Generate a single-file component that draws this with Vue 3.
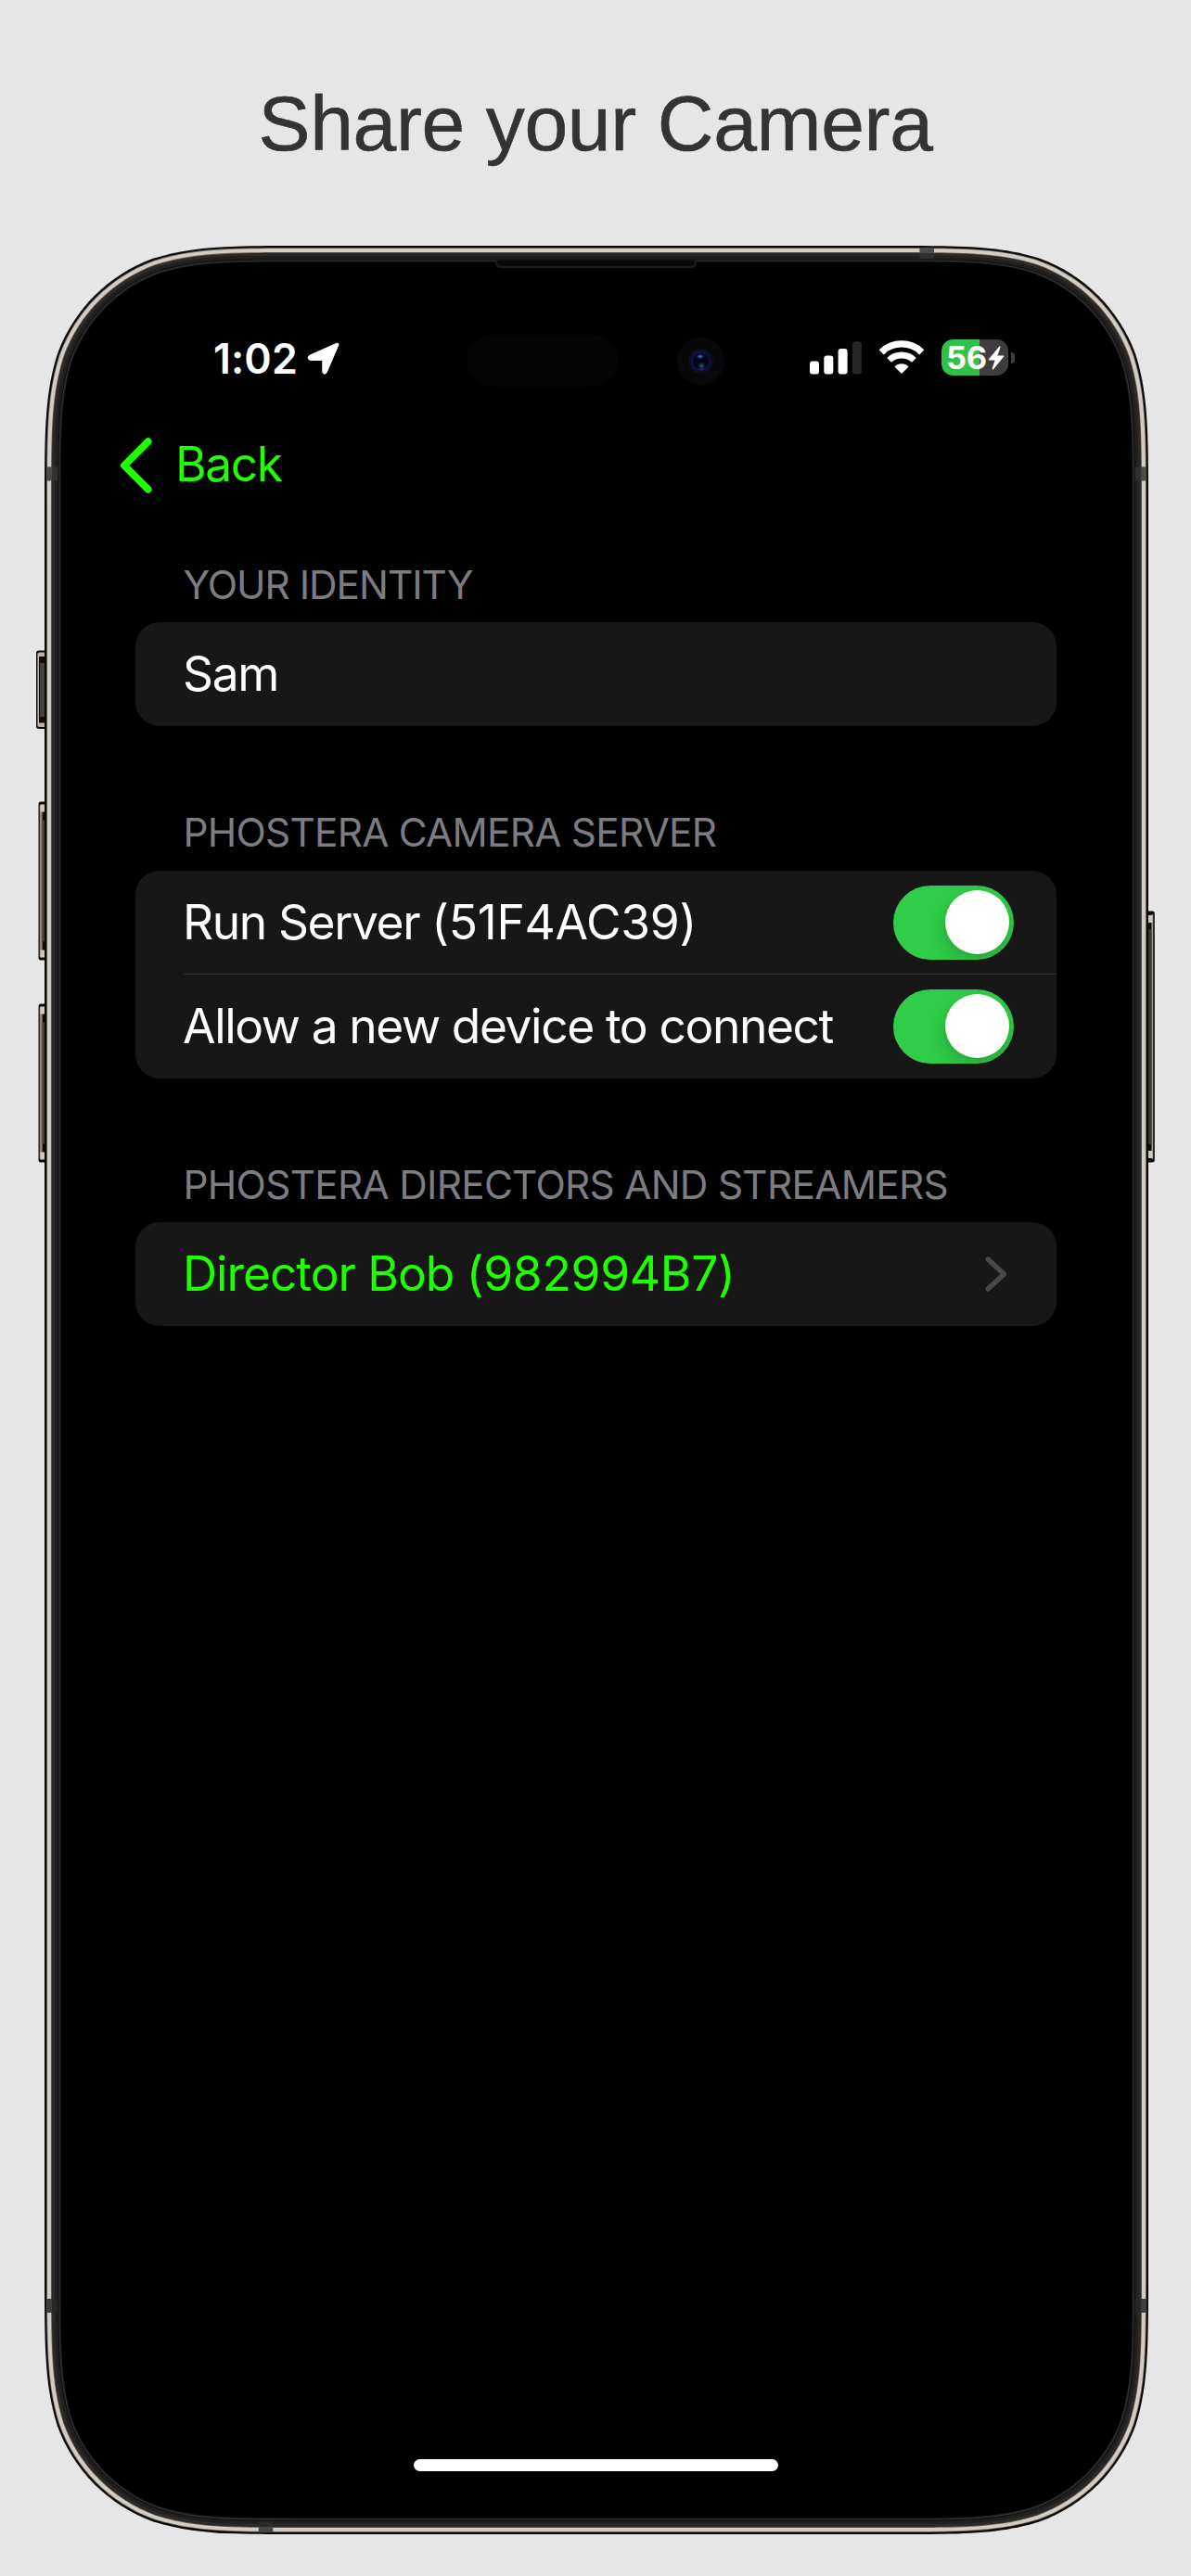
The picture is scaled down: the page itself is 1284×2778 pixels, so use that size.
<script setup>
import { ref } from 'vue'

const W = 1190
const H = 2468
const R = 185

// Continuous-curvature rounded rectangle, inset from the body outline
function shell(inset) {
  const w = W - inset * 2
  const h = H - inset * 2
  const r = R - inset
  const a = 1.52866 * r
  const b = 1.08849 * r
  const c = 0.86841 * r
  const d = 0.63149 * r
  const e = 0.37282 * r
  const f = 0.16906 * r
  const g = 0.07491 * r
  const X = (v) => (inset + v).toFixed(2)
  const p = (x, y) => `${X(x)} ${X(y)}`
  return [
    `M${p(a, 0)}L${p(w - a, 0)}`,
    `C${p(w - b, 0)} ${p(w - c, 0)} ${p(w - d, g)}`,
    `C${p(w - e, f)} ${p(w - f, e)} ${p(w - g, d)}`,
    `C${p(w, c)} ${p(w, b)} ${p(w, a)}`,
    `L${p(w, h - a)}`,
    `C${p(w, h - b)} ${p(w, h - c)} ${p(w - g, h - d)}`,
    `C${p(w - f, h - e)} ${p(w - e, h - f)} ${p(w - d, h - g)}`,
    `C${p(w - c, h)} ${p(w - b, h)} ${p(w - a, h)}`,
    `L${p(a, h)}`,
    `C${p(b, h)} ${p(c, h)} ${p(d, h - g)}`,
    `C${p(e, h - f)} ${p(f, h - e)} ${p(g, h - d)}`,
    `C${p(0, h - c)} ${p(0, h - b)} ${p(0, h - a)}`,
    `L${p(0, a)}`,
    `C${p(0, b)} ${p(0, c)} ${p(g, d)}`,
    `C${p(f, e)} ${p(e, f)} ${p(d, g)}`,
    `C${p(c, 0)} ${p(b, 0)} ${p(a, 0)}Z`,
  ].join('')
}

const layers = [
  [0, '#0a0a09'],
  [2.2, '#77706a'],
  [3, '#d4cbc3'],
  [7, '#655e58'],
  [7.8, '#2b2927'],
  [11, '#201f1d'],
  [14.4, '#0c0c0c'],
  [15.4, '#323232'],
  [16.6, '#1a1a1a'],
  [17.6, '#000'],
].map(([inset, fill]) => ({ d: shell(inset), fill }))

// Antenna bands: x, y, width, height, fill in body coordinates
const bands = [
  [943.5, 2, 15.5, 6, '#4b4b4a'],
  [943.5, 8, 15.5, 6, '#30302f'],
  [2.3, 238.5, 6, 15, '#4b4b4a'],
  [8.3, 238.5, 6, 15, '#30302f'],
  [1181.7, 238.5, 6, 15, '#4b4b4a'],
  [1175.7, 238.5, 6, 15, '#30302f'],
  [2.3, 2214, 6, 15, '#3d3d3c'],
  [8.3, 2214, 6, 15, '#272726'],
  [1181.7, 2214, 6, 15, '#3d3d3c'],
  [1175.7, 2214, 6, 15, '#272726'],
  [230.7, 2460, 15.5, 6, '#464645'],
  [230.7, 2454, 15.5, 6, '#2a2a29'],
]

const volumeKeys = [599.5, 817.5]

const name = ref('Sam')
const toggles = ref([
  { label: 'Run Server', id: '(51F4AC39)', on: true },
  { label: 'Allow a new device to connect', id: '', on: true },
])
</script>

<template>
  <main class="stage">
    <h1 class="title">Share your Camera</h1>

    <div class="phone">
      <svg class="body" width="1210" height="2468" viewBox="-10 0 1210 2468" aria-hidden="true">
        <g>
          <rect x="-9" y="436.5" width="14" height="84.5" rx="3" fill="#0d0c0b" />
          <rect x="-7.6" y="438.5" width="12" height="80.5" rx="2" fill="#b9b0a7" />
          <rect x="-6" y="443" width="10" height="71.5" fill="#0f0e0d" />
          <rect x="-5" y="450" width="6" height="58" fill="#454240" />
        </g>
        <g v-for="y in volumeKeys" :key="y">
          <rect x="-6.5" :y="y" width="12" height="171" rx="2.5" fill="#0d0c0b" />
          <rect x="-5.3" :y="y + 3" width="3" height="165" rx="1.5" fill="#8d857e" />
          <rect x="-4.5" :y="y + 3" width="5.5" height="8" rx="1" fill="#d1c8bf" />
          <rect x="-4.5" :y="y + 160" width="5.5" height="8" rx="1" fill="#d1c8bf" />
          <rect x="-2.6" :y="y + 20" width="3.2" height="131" fill="#47423f" />
        </g>
        <g>
          <rect x="1184" y="717.5" width="12.8" height="271" rx="2.5" fill="#0d0c0b" />
          <rect x="1193.4" y="721" width="1.8" height="264" rx="0.9" fill="#9b928a" />
          <rect x="1189.5" y="722" width="5" height="8" rx="1" fill="#d1c8bf" />
          <rect x="1189.5" y="976" width="5" height="8" rx="1" fill="#d1c8bf" />
          <rect x="1190" y="737" width="3.2" height="232" fill="#393533" />
        </g>
        <path v-for="l in layers" :key="l.fill" :d="l.d" :fill="l.fill" />
        <rect
          v-for="(b, i) in bands" :key="i"
          :x="b[0]" :y="b[1]" :width="b[2]" :height="b[3]" :fill="b[4]"
        />
        <path d="M486 15.5H703V18Q703 24 697 24H492Q486 24 486 18Z" fill="#1c1c1c" />
        <path d="M488 15.5V18Q489 22 494 22H695Q700 22 701 18V15.5Z" fill="#0a0a0a" />
      </svg>

      <div class="screen">
        <header class="status">
          <div class="clock">
            <span class="time">1:02</span>
            <svg width="36" height="36" viewBox="0 0 36 36" aria-hidden="true">
              <path d="M2.8 14.2 31.6 1.4Q34.8.4 33.7 3.5L21.2 32.6Q20 34.8 18 34Q16.8 33.5 16.8 31.6V20.4Q16.8 19.4 15.8 19.4H4Q1.6 19.4 1.2 17.3Q.9 15.2 2.8 14.2Z" fill="#fff" stroke="#fff" stroke-width="1" />
            </svg>
          </div>

          <div class="sensors">
            <span class="pill"></span>
            <span class="lens">
              <svg width="51" height="51" viewBox="0 0 51 51" aria-hidden="true">
                <defs>
                  <radialGradient id="spotA"><stop offset="0" stop-color="#6a76d8" /><stop offset="1" stop-color="#1c1f7c" stop-opacity="0" /></radialGradient>
                  <radialGradient id="spotB"><stop offset="0" stop-color="#1c6a78" /><stop offset="1" stop-color="#0b2a4c" stop-opacity="0" /></radialGradient>
                  <radialGradient id="spotC"><stop offset="0" stop-color="#6a1c8c" /><stop offset="1" stop-color="#2c0b4c" stop-opacity="0" /></radialGradient>
                </defs>
                <circle cx="25.5" cy="25.5" r="25.5" fill="#080709" />
                <circle cx="25.5" cy="25.5" r="13.5" fill="#0e0e1c" />
                <circle cx="25.5" cy="25.5" r="9.6" fill="#04040f" stroke="#10124a" stroke-width="2" />
                <ellipse cx="25" cy="20.5" rx="5" ry="3.4" fill="url(#spotA)" />
                <ellipse cx="26.3" cy="30.5" rx="5" ry="4.4" fill="url(#spotB)" />
                <ellipse cx="26.3" cy="34" rx="4" ry="2" fill="url(#spotC)" />
              </svg>
            </span>
          </div>

          <div class="indicators">
            <svg class="signal" width="56" height="36" viewBox="0 0 56 36" aria-hidden="true">
              <rect x="0" y="21.5" width="10" height="14" rx="3" fill="#fff" />
              <rect x="15.3" y="15.5" width="10" height="20" rx="3" fill="#fff" />
              <rect x="30.6" y="8" width="10" height="27.5" rx="3" fill="#fff" />
              <rect x="46" y="0.3" width="9.8" height="35.2" rx="3" fill="#272727" />
            </svg>
            <svg class="wifi" width="50" height="37" viewBox="0 0 50 37" fill="none" stroke="#fff" aria-hidden="true">
              <path d="M3.2 12.8A31.2 31.2 0 0 1 46.8 12.8" stroke-width="7.2" />
              <path d="M11.6 21.4A19.3 19.3 0 0 1 38.4 21.4" stroke-width="6.8" />
              <path d="M25 36 17.4 28.4A10.8 10.8 0 0 1 32.6 28.4Z" fill="#fff" stroke="none" />
            </svg>
            <div class="battery">
              <div class="cell">
                <span class="percent">56</span>
                <svg width="18" height="26" viewBox="0 0 18 26" aria-hidden="true">
                  <path d="M12.4.6 1 14.2Q.2 15.4 1.6 15.4H7.6L4.6 24.4Q4.6 26 6 25.2L17.2 11.6Q18 10.4 16.6 10.4H10.4L13.5 1.6Q13.6 0 12.4.6Z" fill="#fff" />
                </svg>
              </div>
              <span class="nub"></span>
            </div>
          </div>
        </header>

        <nav class="nav">
          <svg width="36" height="60" viewBox="0 0 36 60" aria-hidden="true">
            <path d="M30.7 4.2 5 30 30.7 55.8" fill="none" stroke="#20ff00" stroke-width="7.8" stroke-linecap="round" stroke-linejoin="round" />
          </svg>
          <span class="back">Back</span>
        </nav>

        <section class="group">
          <h2 class="identity">YOUR IDENTITY</h2>
          <div class="card">
            <div class="row"><span class="label">{{ name }}</span></div>
          </div>
        </section>

        <section class="group">
          <h2 class="camera">PHOSTERA CAMERA SERVER</h2>
          <div class="card">
            <div v-for="t in toggles" :key="t.label" class="row">
              <span class="label">{{ t.label }} <span class="id">{{ t.id }}</span></span>
              <button class="switch" :class="{ on: t.on }" role="switch" :aria-checked="t.on" @click="t.on = !t.on">
                <span class="knob"></span>
              </button>
            </div>
          </div>
        </section>

        <section class="group">
          <h2 class="directors">PHOSTERA DIRECTORS AND STREAMERS</h2>
          <div class="card">
            <div class="row link">
              <span class="label director">Director Bob <span class="id">(982994B7)</span></span>
              <svg width="24" height="38" viewBox="0 0 24 38" aria-hidden="true">
                <path d="M3.2 3 20.4 19 3.2 35" fill="none" stroke="#48484a" stroke-width="5.4" stroke-linecap="round" stroke-linejoin="round" />
              </svg>
            </div>
          </div>
        </section>

        <div class="home"></div>
      </div>
    </div>
  </main>
</template>

<style>
body {
  margin: 0;
  background: #e6e6e6;
}
</style>

<style scoped>
.stage {
  width: 1284px;
  height: 2778px;
  overflow: hidden;
  background: #e6e6e6;
  font-family: Inter, "Liberation Sans", sans-serif;
}

.title {
  height: 175px;
  margin: 0 0 90px;
  padding-top: 88px;
  box-sizing: border-box;
  font: 400 84px/90px "Liberation Sans", Arial, sans-serif;
  letter-spacing: -0.35px;
  text-align: center;
  color: #333;
  -webkit-text-stroke: 0.6px #333;
}

.phone {
  position: relative;
  width: 1190px;
  height: 2468px;
  margin-left: 48px;
}

.body {
  position: absolute;
  top: 0;
  left: -10px;
}

.screen {
  position: relative;
  display: flex;
  flex-direction: column;
  height: 2468px;
  padding: 96px 99px 68px 98px;
  box-sizing: border-box;
}

.status {
  display: flex;
  align-items: center;
  height: 56px;
  padding: 0 44px 0 84px;
}

.clock {
  display: flex;
  align-items: center;
  width: 273px;
}

.time {
  width: 100px;
  margin: -4px 1px 0 0;
  line-height: 54px;
  font-size: 44.7px;
  font-weight: 600;
  letter-spacing: 0.1px;
  color: #fff;
}

.clock svg {
  margin-top: -5px;
}

.sensors {
  display: flex;
  align-items: center;
  gap: 63px;
  width: 278px;
}

.pill {
  width: 164px;
  height: 56px;
  border-radius: 28px;
  background: #040404;
}

.lens {
  display: flex;
}

.indicators {
  display: flex;
  align-items: center;
  margin-left: 91.5px;
}

.signal {
  margin-top: -6px;
}

.wifi {
  margin: -7px 18px 0 18.5px;
}

.battery {
  display: flex;
  align-items: center;
  gap: 3px;
  margin-top: -7px;
}

.cell {
  display: flex;
  align-items: center;
  width: 72px;
  height: 39px;
  padding-left: 5px;
  box-sizing: border-box;
  border-radius: 12.5px;
  background: linear-gradient(90deg, #31c148 41px, #3d3d3f 41px);
}

.percent {
  width: 45px;
  line-height: 39px;
  font-size: 34.5px;
  font-weight: 700;
  letter-spacing: -0.4px;
  color: #fff;
}

.nub {
  width: 4px;
  height: 12px;
  border-radius: 0 5px 5px 0;
  background: #3d3d3f;
}

.nav {
  display: flex;
  align-items: center;
  height: 60px;
  margin: 54.5px 0 0 -17px;
}

.back {
  margin: -3px 0 0 24px;
  line-height: 60px;
  font-size: 51.5px;
  letter-spacing: -1.4px;
  color: #20ff00;
}

.group {
  margin-bottom: 90px;
}

.nav + .group {
  margin-top: 74px;
}

.group h2 {
  height: 50px;
  margin: 0 0 15.5px;
  padding-left: 51.5px;
  line-height: 50px;
  font-size: 42.3px;
  font-weight: 400;
  white-space: nowrap;
  color: #7d7c82;
}

.identity { letter-spacing: -1px; }
.camera { letter-spacing: -0.74px; }
.directors { letter-spacing: -0.7px; }

.card {
  border-radius: 26px;
  background: #171717;
}

.row {
  position: relative;
  display: flex;
  align-items: center;
  justify-content: space-between;
  height: 112px;
  padding: 0 46px 0 51px;
  line-height: 62px;
  font-size: 51.5px;
  white-space: nowrap;
  color: #fff;
}

.row + .row::before {
  content: "";
  position: absolute;
  top: -1px;
  left: 52px;
  right: 0;
  height: 1px;
  background: #303032;
}

.label {
  margin-top: -2px;
  letter-spacing: -1.4px;
}

.director { letter-spacing: -1.05px; }
.id { letter-spacing: -0.28px; }

.link {
  padding-right: 53px;
  color: #20ff00;
}

.switch {
  display: flex;
  align-items: center;
  width: 130px;
  height: 80px;
  padding: 0 5px;
  border: 0;
  border-radius: 40px;
  background: #39393d;
  overflow: hidden;
}

.switch.on {
  justify-content: flex-end;
  background: #30cd48;
}

.knob {
  width: 69px;
  height: 69px;
  border-radius: 50%;
  background: #fff;
  box-shadow: 0 8px 20px rgba(0, 0, 0, 0.2), 0 1px 3px rgba(0, 0, 0, 0.06);
}

.home {
  width: 393px;
  height: 13px;
  margin: auto auto 0 300px;
  border-radius: 7px;
  background: #fff;
}
</style>
